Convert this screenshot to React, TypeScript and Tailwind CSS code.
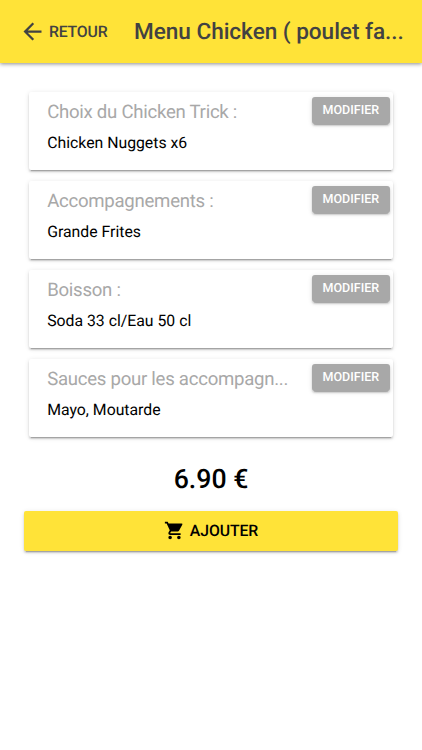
import { MdArrowBack, MdShoppingCart } from "react-icons/md";

interface Choice {
  title: string;
  value: string;
}

const choices: Choice[] = [
  { title: "Choix du Chicken Trick :", value: "Chicken Nuggets x6" },
  { title: "Accompagnements :", value: "Grande Frites" },
  { title: "Boisson :", value: "Soda 33 cl/Eau 50 cl" },
  { title: "Sauces pour les accompagn...", value: "Mayo, Moutarde" },
];

function ChoiceCard({ title, value }: Choice) {
  return (
    <div className="flex h-[78px] justify-between rounded-[2px] bg-white pl-[18px] pr-[3px] pt-[5px] shadow-[0_3px_1px_-2px_rgba(0,0,0,0.2),0_2px_2px_0_rgba(0,0,0,0.14),0_1px_5px_0_rgba(0,0,0,0.12)]">
      <div>
        <h2 className="whitespace-nowrap pt-[3px] text-[18.6px] leading-6 tracking-[-0.27px] text-[#a8a8a8] [text-rendering:geometricPrecision]">
          {title}
        </h2>
        <p className="mt-[7.4px] text-[15.8px] leading-6 text-black [text-rendering:geometricPrecision]">
          {value}
        </p>
      </div>
      <button className="h-[27px] w-[78px] shrink-0 rounded-[3px] bg-[#a8a8a8] text-[12.5px] font-medium leading-[25px] text-white shadow-[0_3px_1px_-2px_rgba(0,0,0,0.2),0_2px_2px_0_rgba(0,0,0,0.14),0_1px_5px_0_rgba(0,0,0,0.12)] [text-rendering:geometricPrecision]">
        MODIFIER
      </button>
    </div>
  );
}

export default function App() {
  return (
    <div className="min-h-screen bg-white font-[Roboto,sans-serif]">
      <header className="flex h-[63px] items-center bg-[#ffe338] text-[#424242] shadow-[0_1px_4px_rgba(0,0,0,0.45)]">
        <button className="ml-[19px] flex w-[115px] items-center gap-[3px] text-[15.8px] font-medium leading-[25px] tracking-[-0.2px] [text-rendering:geometricPrecision]">
          <MdArrowBack className="size-[27px]" />
          RETOUR
        </button>
        <h1 className="whitespace-nowrap pt-px text-[22.6px] font-medium tracking-[-0.04px] [text-rendering:geometricPrecision]">
          Menu Chicken ( poulet fa...
        </h1>
      </header>

      <main className="px-6 pt-[29px]">
        <div className="flex flex-col gap-[10.9px] px-[5.2px]">
          {choices.map((choice) => (
            <ChoiceCard key={choice.title} {...choice} />
          ))}
        </div>

        <p className="mt-[24.5px] text-center text-[26.7px] font-medium leading-9 text-black [text-rendering:geometricPrecision]">
          6.90 €
        </p>

        <button className="mt-[13.8px] flex h-10 w-full items-center justify-center gap-[5px] rounded-[2px] bg-[#ffe338] text-[15.8px] font-medium tracking-[-0.1px] text-black shadow-[0_3px_1px_-2px_rgba(0,0,0,0.2),0_2px_2px_0_rgba(0,0,0,0.14),0_1px_5px_0_rgba(0,0,0,0.12)] [text-rendering:geometricPrecision]">
          <MdShoppingCart className="size-[21px]" />
          AJOUTER
        </button>
      </main>
    </div>
  );
}
